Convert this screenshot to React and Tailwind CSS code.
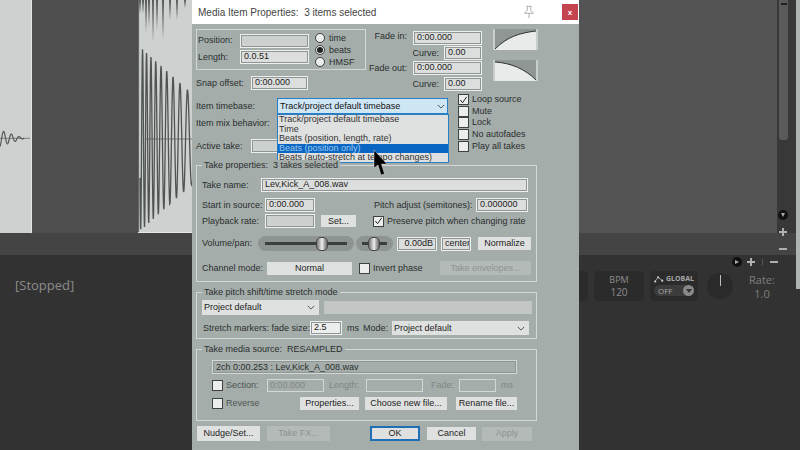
import React from "react";

const wave = (x0, x1, mid, amp, period) => {
  // decaying sine with a period that grows, used for the kick waveform
  let d = "";
  let phase = 0;
  for (let x = x0; x <= x1; x += 0.25) {
    const t = x - x0;
    phase += (0.25 / period(t)) * Math.PI * 2;
    d += `${d ? "L" : "M"}${x} ${(mid + Math.sin(phase) * amp(t)).toFixed(2)} `;
  }
  return d;
};

const Field = ({ className = "", bg = "bg-[#dcdedd]", children }) => (
  <div className={`h-[14px] shrink-0 ${bg} border border-[#eef0ef] outline outline-1 -outline-offset-2 outline-[#8f9694] pl-[3px] text-[#222] leading-[11px] whitespace-nowrap overflow-hidden ${className}`}>
    {children}
  </div>
);

const Btn = ({ className = "", disabled, children }) => (
  <div className={`shrink-0 flex items-center justify-center whitespace-nowrap ${disabled ? "bg-[#b4bab8] text-[#8c9391]" : "bg-[#dfe1e0] text-[#1c1c1c]"} ${className}`}>
    {children}
  </div>
);

const Check = ({ checked, className = "" }) => (
  <div className={`w-[11px] h-[11px] shrink-0 bg-[#eceeed] border border-[#3d4140] flex items-center justify-center ${className}`}>
    {checked && (
      <svg viewBox="0 0 10 10" className="w-[10px] h-[10px]">
        <path d="M1.5 5 L4 8 L8.5 1.5" fill="none" stroke="#222" strokeWidth="1.1" />
      </svg>
    )}
  </div>
);

const Radio = ({ on, label }) => (
  <div className="flex items-center h-[12px]">
    <div className="w-[10px] h-[10px] rounded-full bg-[#eceeed] border border-[#3d4140] flex items-center justify-center">
      {on && <div className="w-[6px] h-[6px] rounded-full bg-[#222]" />}
    </div>
    <span className="ml-[4px]">{label}</span>
  </div>
);

const Chevron = ({ className = "" }) => (
  <svg viewBox="0 0 10 6" className={`w-[8px] h-[5px] ${className}`}>
    <path d="M1 1 L5 5 L9 1" fill="none" stroke="#333" strokeWidth="1" />
  </svg>
);

const Group = ({ title, className = "", children }) => (
  <div className={`relative border border-[#d3d7d5] ${className}`}>
    <span className="absolute left-[5px] top-[-6px] bg-[#a5adab] px-[2px] leading-[11px] whitespace-pre">{title}</span>
    {children}
  </div>
);

const Knob = ({ className = "" }) => (
  <div className={`absolute top-[1px] w-[12px] h-[14px] rounded-[5px] border border-[#444] bg-gradient-to-r from-[#777] via-[#eee] to-[#666] ${className}`} />
);

const CurveBox = ({ d, fill }) => (
  <svg viewBox="0 0 45 21" className="w-[45px] h-[21px] block">
    <rect x="0" y="0" width="45" height="21" fill="#8f9694" />
    <path d={fill} fill="#e9ebea" />
    <path d={d} fill="none" stroke="#2f3332" strokeWidth="1" />
    <rect x="0" y="0" width="2" height="21" fill="#c9cdcb" />
    <rect x="43" y="0" width="3" height="21" fill="#c9cdcb" />
  </svg>
);

const Card = ({ className = "", children }) => (
  <div className={`bg-[#2b2b2b] rounded-[4px] h-[30px] shrink-0 ${className}`}>{children}</div>
);

const Plus = () => (
  <svg viewBox="0 0 8 8" className="w-[8px] h-[8px]"><path d="M4 0 V8 M0 4 H8" stroke="#b0b0b0" strokeWidth="2" /></svg>
);
const Minus = () => (
  <svg viewBox="0 0 8 8" className="w-[8px] h-[8px]"><path d="M0 4 H8" stroke="#b0b0b0" strokeWidth="2" /></svg>
);

const topSpikes = [
  [140, 14], [143, 14], [146, 33], [149, 27], [153, 42], [157, 30], [163, 40], [170, 20], [177, 20], [185, 8],
];

export default function App() {
  const kick = wave(140, 192, 139, (t) => 92 - t * 0.9, (t) => 3.6 + t * 0.09);
  const tail = wave(-2, 25, 139, (t) => Math.max(0, 9 - t * 0.33), () => 8);
  return (
    <div className="relative w-[800px] h-[450px] overflow-hidden bg-[#323232]" style={{ fontFamily: '"Open Sans", sans-serif' }}>
      {/* arrange view behind the dialog */}
      <div className="flex h-[233px]">
        <svg viewBox="0 0 32 233" className="w-[32px] h-[233px] bg-[#cdd1cf] border-r border-[#e4e6e5]">
          <path d="M0 139 H31" stroke="#555" strokeWidth="0.7" />
          <path d={tail} fill="none" stroke="#555" strokeWidth="1.2" />
        </svg>
        <div className="w-[106px] bg-[#4e4e4e]" />
        <svg viewBox="138 0 54 233" className="w-[54px] h-[233px] bg-[#cdd1cf]">
          <path d={kick} fill="none" stroke="#4f5352" strokeWidth="1.3" />
          <path d="M146 139 H192" stroke="#555" strokeWidth="0.7" />
          <path d="M138.5 0 V232" stroke="#666" strokeWidth="1.2" />
          <path d="M138 232.5 H192" stroke="#e6e8e7" strokeWidth="1" />
          {topSpikes.map(([x, y]) => (
            <path key={x} d={`M${x - 1} 0 L${x} ${y} L${x + 1} 0Z`} fill="#555958" />
          ))}
        </svg>
        <div className="w-[585px] bg-[#545454]" />
        <div className="w-[19px] bg-[#383838] pl-[2px]">
          <div className="w-[9px] h-[140px] rounded-b-[3px] bg-[#5a5a5a] flex justify-center pt-[3px]">
            <div className="w-[6px] h-[2px] bg-[#222]" />
          </div>
        </div>
      </div>
      <div className="h-[22px] bg-[#444444]" />
      <div className="flex items-start">
        <div className="text-[#8c8c8c] text-[13px] mt-[21px] ml-[15px] w-[525px] leading-[18px]">
          [Stopped]
        </div>
        <Card className="w-[48px] mt-[16px]" />
        <Card className="w-[50px] ml-[6px] mt-[16px] flex flex-col items-center text-[#8b8b8b] text-[9px] leading-[13px] pt-[2px]" >
          <span>BPM</span>
          <span className="text-[10px]">120</span>
        </Card>
        <Card className="w-[48px] ml-[6px] mt-[16px] text-[#a5a5a5] text-[7px] font-bold px-[4px] pt-[3px] leading-[10px]">
          <div className="flex items-center gap-[2px]">
            <svg viewBox="0 0 12 8" className="w-[12px] h-[8px]">
              <path d="M1 7 L5 2 L10 6" fill="none" stroke="#bbb" strokeWidth="1" />
              <circle cx="1.5" cy="7" r="1.3" fill="#ccc" />
              <circle cx="5" cy="2" r="1.3" fill="#ccc" />
              <circle cx="10" cy="6" r="1.3" fill="#ccc" />
            </svg>
            GLOBAL
          </div>
          <div className="mt-[1px] h-[11px] rounded-full bg-[#3c3c3c] flex items-center justify-between pl-[4px] text-[8px] font-normal">
            OFF
            <div className="w-[11px] h-[11px] rounded-full bg-[#8a8a8a] flex items-center justify-center">
              <div className="w-0 h-0 border-x-[3px] border-x-transparent border-t-[4px] border-t-[#333]" />
            </div>
          </div>
        </Card>
        <div className="w-[26px] h-[26px] rounded-full bg-[#2a2a2a] ml-[9px] mt-[18px] flex justify-center pt-[2px]">
          <div className="w-px h-[11px] bg-[#bbb]" />
        </div>
        <div className="ml-[16px] mt-[18px] text-[#7f7f7f] text-[11px] leading-[14px] text-center">
          <div>Rate:</div>
          <div>1.0</div>
        </div>
      </div>

      {/* small track / zoom controls */}
      <div className="absolute left-[732px] top-[257px] flex items-center gap-[5px]">
        <div className="w-[10px] h-[10px] rounded-full bg-[#111] flex items-center justify-center">
          <div className="w-0 h-0 border-y-[2.5px] border-y-transparent border-l-[4px] border-l-[#aaa]" />
        </div>
        <Plus />
        <div className="w-px h-[6px] bg-[#555] mx-[2px]" />
        <Minus />
      </div>
      <div className="absolute left-[778px] top-[210px] flex flex-col items-center gap-[8px]">
        <div className="w-[10px] h-[10px] rounded-full bg-[#111] flex items-center justify-center">
          <div className="w-0 h-0 border-x-[2.5px] border-x-transparent border-t-[4px] border-t-[#aaa]" />
        </div>
        <Plus />
        <div className="mt-[1px]"><Minus /></div>
      </div>
      <div className="absolute left-[796px] top-0 w-[4px] h-[289px] bg-[#aeb4b2]" />

      {/* Media Item Properties window */}
      <div className="absolute left-[192px] top-0 w-[387px] h-[450px] bg-[#a5adab] text-[9px] text-[#2a2e2d] leading-[11px] whitespace-nowrap" style={{ fontFamily: '"Liberation Sans", sans-serif' }}>
        <div className="h-[24px] bg-white flex items-center pl-[6px] text-[#444] text-[10px]">
          Media Item Properties:&nbsp; 3 items selected
          <svg viewBox="0 0 16 16" className="w-[14px] h-[14px] ml-auto">
            <path d="M5 1.5 H11 M6 1.5 V6 L3 9.5 H13 L10 6 V1.5 M8 9.5 V15" fill="none" stroke="#a3a3a3" strokeWidth="1" />
          </svg>
          <div className="ml-[26px] mr-[1px] w-[16px] h-[16px] bg-[#c4444f] text-white flex items-center justify-center text-[8px] font-bold">x</div>
        </div>

        {/* position / fades */}
        <div className="flex h-[68px]">
          <div className="ml-[4px] w-[175px] shrink-0">
            <div className="mt-[5px] w-[170px] h-[41px] border border-[#d3d7d5] flex">
              <div className="w-[43px] pl-[1px] pt-[5px] flex flex-col gap-[6px]">
                <span>Position:</span>
                <span>Length:</span>
              </div>
              <div className="flex flex-col gap-[2px] pt-[4px]">
                <Field bg="bg-[#ccd0ce]" className="w-[69px]" />
                <Field className="w-[69px]">0.0.51</Field>
              </div>
              <div className="ml-[6px] pt-[2px]">
                <Radio label="time" />
                <Radio on label="beats" />
                <Radio label="HMSF" />
              </div>
            </div>
            <div className="flex items-center mt-[6px]">
              <span className="w-[55px]">Snap offset:</span>
              <Field className="w-[57px]">0:00.000</Field>
            </div>
          </div>
          <div className="ml-[3px] w-[108px] shrink-0 pt-[7px] text-right">
            <div className="flex items-center justify-end">
              <span className="mr-[6px] -mt-[3px]">Fade in:</span>
              <Field className="w-[69px] text-left">0:00.000</Field>
            </div>
            <div className="flex items-center justify-end mt-[1px]">
              <span className="mr-[5px]">Curve:</span>
              <Field className="w-[38px] text-left">0.00</Field>
            </div>
            <div className="flex items-center justify-end mt-[1px]">
              <span className="mr-[6px]">Fade out:</span>
              <Field className="w-[69px] text-left">0:00.000</Field>
            </div>
            <div className="flex items-center justify-end mt-[2px]">
              <span className="mr-[5px]">Curve:</span>
              <Field className="w-[38px] text-left">0.00</Field>
            </div>
          </div>
          <div className="ml-[11px] pt-[5px] flex flex-col gap-[10px]">
            <CurveBox d="M2 20 C14 8 26 4 43 2" fill="M2 20 C14 8 26 4 43 2 V21 H2Z" />
            <CurveBox d="M2 2 C18 3 32 9 43 20" fill="M2 2 C18 3 32 9 43 20 V21 H2Z" />
          </div>
        </div>

        {/* timebase / flags */}
        <div className="flex h-[73px]">
          <div className="relative w-[257px] shrink-0 ml-[4px]">
            <div className="flex items-center mt-[6px]">
              <span className="w-[81px]">Item timebase:</span>
              <div className="w-[171px] h-[16px] bg-[#cfe6f5] border border-[#2a7fc4] flex items-center justify-between pl-[2px] pr-[2px] text-[#111]">
                Track/project default timebase
                <Chevron />
              </div>
            </div>
            <div className="mt-[4px]">Item mix behavior:</div>
            <div className="flex items-center mt-[10px]">
              <span className="w-[55px]">Active take:</span>
              <Field bg="bg-[#ccd0ce]" className="w-[120px]" />
            </div>
            {/* open dropdown list */}
            <div className="absolute left-[81px] top-[22px] w-[172px] h-[49px] bg-[#dfe1e0] border border-[#2a7fc4] text-[#333] leading-[9.5px]">
              <div className="pl-[1px]">Track/project default timebase</div>
              <div className="pl-[1px]">Time</div>
              <div className="pl-[1px]">Beats (position, length, rate)</div>
              <div className="pl-[1px] bg-[#0a66c2] text-[#9cc8ec]">Beats (position only)</div>
              <div className="pl-[1px]">Beats (auto-stretch at tempo changes)</div>
            </div>
          </div>
          <div className="ml-[5px] flex flex-col mt-[2px]">
            {["Loop source", "Mute", "Lock", "No autofades", "Play all takes"].map((t, i) => (
              <div key={t} className="flex items-center h-[11.6px]">
                <Check checked={i === 0} />
                <span className="ml-[3px]">{t}</span>
              </div>
            ))}
          </div>
        </div>

        {/* take properties */}
        <Group title="Take properties:  3 takes selected" className="ml-[4px] w-[341px] h-[117px] pl-[5px]">
          <div className="flex items-center mt-[12px]">
            <span className="w-[59px]">Take name:</span>
            <Field className="w-[267px]">Lev,Kick_A_008.wav</Field>
          </div>
          <div className="flex items-center mt-[6px]">
            <span className="w-[63px]">Start in source:</span>
            <Field className="w-[50px]">0:00.000</Field>
            <span className="ml-[59px] w-[102px]">Pitch adjust (semitones):</span>
            <Field className="w-[52px]">0.000000</Field>
          </div>
          <div className="flex items-center mt-[2px]">
            <span className="w-[63px]">Playback rate:</span>
            <Field bg="bg-[#ccd0ce]" className="w-[50px]" />
            <Btn className="w-[35px] h-[12px] ml-[6px]">Set...</Btn>
            <Check checked className="ml-[17px]" />
            <span className="ml-[3px]">Preserve pitch when changing rate</span>
          </div>
          <div className="flex items-center mt-[8px]">
            <span className="w-[56px]">Volume/pan:</span>
            <div className="relative w-[96px] h-[15px] rounded-full bg-[#8d9492]">
              <div className="absolute left-[7px] right-[7px] top-[6px] h-[3px] bg-[#3a3e3d]" />
              <Knob className="left-[58px]" />
            </div>
            <div className="relative w-[37px] h-[15px] rounded-full bg-[#8d9492] ml-[2px]">
              <div className="absolute left-[6px] right-[6px] top-[6px] h-[3px] bg-[#3a3e3d]" />
              <Knob className="left-[12px]" />
            </div>
            <Field className="w-[40px] ml-[4px] text-right pr-[3px]">0.00dB</Field>
            <Field className="w-[30px] ml-[4px] pl-[2px]">center</Field>
            <Btn className="w-[53px] h-[13px] ml-[7px]">Normalize</Btn>
          </div>
          <div className="flex items-center mt-[10px]">
            <span className="w-[65px]">Channel mode:</span>
            <Btn className="w-[85px] h-[13px]">Normal</Btn>
            <Check className="ml-[7px]" />
            <span className="ml-[3px] w-[67px]">Invert phase</span>
            <Btn disabled className="w-[91px] h-[14px]">Take envelopes...</Btn>
          </div>
        </Group>

        {/* pitch shift */}
        <Group title="Take pitch shift/time stretch mode" className="ml-[4px] mt-[10px] w-[341px] h-[47px] pl-[5px]">
          <div className="flex items-center mt-[7px]">
            <div className="w-[117px] h-[15px] bg-[#dfe1e0] flex items-center justify-between px-[2px] text-[#1c1c1c]">
              Project default
              <Chevron className="mr-[2px]" />
            </div>
            <div className="ml-[5px] w-[208px] h-[13px] bg-[#c2c6c4]" />
          </div>
          <div className="flex items-center mt-[6px]">
            <span className="w-[108px] pl-[1px]">Stretch markers: fade size:</span>
            <Field bg="bg-[#eceeed]" className="w-[32px]">2.5</Field>
            <span className="ml-[5px] w-[16px]">ms</span>
            <span className="w-[29px]">Mode:</span>
            <div className="w-[137px] h-[14px] bg-[#dfe1e0] flex items-center justify-between px-[2px] text-[#1c1c1c]">
              Project default
              <Chevron className="mr-[2px]" />
            </div>
          </div>
        </Group>

        {/* media source */}
        <Group title="Take media source:  RESAMPLED" className="ml-[4px] mt-[10px] w-[341px] h-[72px] pl-[15px]">
          <div className="mt-[10px] w-[305px] h-[14px] border border-[#d3d7d5] outline outline-1 -outline-offset-2 outline-[#8f9694] pl-[3px] leading-[12px]">
            2ch 0:00.253 : Lev,Kick_A_008.wav
          </div>
          <div className="flex items-center mt-[5px] text-[#4d5351]">
            <Check />
            <span className="ml-[3px] w-[41px]">Section:</span>
            <div className="w-[57px] h-[13px] border border-[#d3d7d5] pl-[2px] text-[#7f8684] leading-[11px]">0:00.000</div>
            <span className="ml-[5px] w-[37px] text-[#7f8684]">Length:</span>
            <div className="w-[57px] h-[13px] border border-[#d3d7d5]" />
            <span className="ml-[8px] w-[28px] text-[#7f8684]">Fade:</span>
            <div className="w-[37px] h-[13px] border border-[#d3d7d5]" />
            <span className="ml-[5px] text-[#7f8684]">ms</span>
          </div>
          <div className="flex items-center mt-[5px]">
            <Check />
            <span className="ml-[3px] w-[74px] text-[#4d5351]">Reverse</span>
            <Btn className="w-[59px] h-[13px]">Properties...</Btn>
            <Btn className="w-[82px] h-[13px] ml-[6px]">Choose new file...</Btn>
            <Btn className="w-[61px] h-[13px] ml-[9px]">Rename file...</Btn>
          </div>
        </Group>

        {/* footer buttons */}
        <div className="flex items-center mt-[5px] ml-[5px]">
          <Btn className="w-[63px] h-[15px]">Nudge/Set...</Btn>
          <Btn disabled className="w-[63px] h-[15px] ml-[7px]">Take FX...</Btn>
          <Btn className="w-[50px] h-[15px] ml-[40px] border-2 border-[#1f6fb5]">OK</Btn>
          <Btn className="w-[49px] h-[13px] ml-[7px]">Cancel</Btn>
          <Btn disabled className="w-[50px] h-[14px] ml-[6px]">Apply</Btn>
        </div>
      </div>

      {/* mouse cursor */}
      <svg viewBox="0 0 14 25" className="absolute left-[373px] top-[150px] w-[14px] h-[25px]">
        <path d="M1 0 V18 L5 15 L8 25 L11.5 24 L8.5 14 L14 14 Z" fill="#000" stroke="#fff" strokeWidth="0.4" />
      </svg>
    </div>
  );
}
